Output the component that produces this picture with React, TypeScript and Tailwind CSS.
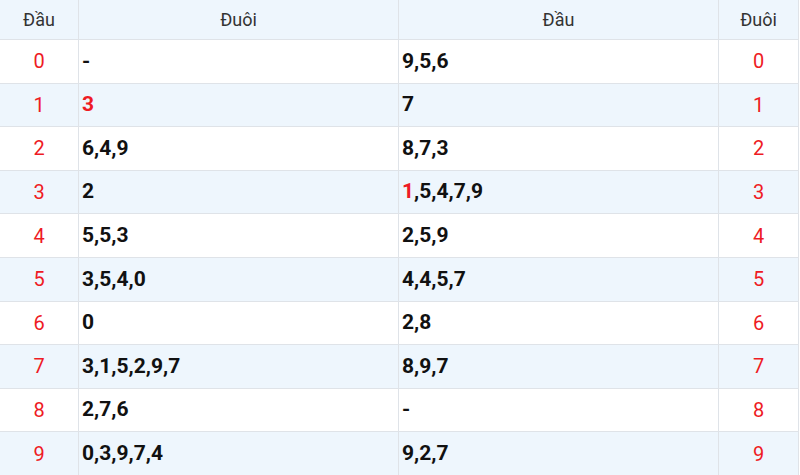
const rows: [string, string, string][] = [
  ["0", "-", "9,5,6"],
  ["1", "3", "7"],
  ["2", "6,4,9", "8,7,3"],
  ["3", "2", "1,5,4,7,9"],
  ["4", "5,5,3", "2,5,9"],
  ["5", "3,5,4,0", "4,4,5,7"],
  ["6", "0", "2,8"],
  ["7", "3,1,5,2,9,7", "8,9,7"],
  ["8", "2,7,6", "-"],
  ["9", "0,3,9,7,4", "9,2,7"],
];

// the 13 / 31 pair is marked in red
const hot: Record<string, number> = { "1-tail": 0, "3-head": 0 };

function Values({ text, mark }: { text: string; mark?: number }) {
  const parts = text.split(",");
  return (
    <>
      {parts.map((p, i) => (
        <span key={i}>
          <span className={i === mark ? "text-[#ee1b24]" : ""}>{p}</span>
          {i < parts.length - 1 ? "," : ""}
        </span>
      ))}
    </>
  );
}

export default function App() {
  const cell = "border-b border-r border-[#dfe3e8] flex items-center";
  const head = `${cell} h-[40px] justify-center bg-[#eef6fd] text-[18px] text-[#333]`;
  return (
    <div className="w-[800px] h-[475px] overflow-hidden bg-white font-['Roboto',sans-serif]">
      <div className="grid grid-cols-[79px_320px_320px_80px]">
        <div className={head}>Đầu</div>
        <div className={head}>Đuôi</div>
        <div className={head}>Đầu</div>
        <div className={head}>Đuôi</div>
        {rows.map(([n, tail, hd], i) => {
          const bg = i % 2 === 1 ? "bg-[#eef6fd]" : "bg-white";
          return (
            <div key={n} className="contents">
              <div className={`${cell} ${bg} h-[43.6px] justify-center text-[20px] text-[#ee1b24]`}>{n}</div>
              <div className={`${cell} ${bg} h-[43.6px] pl-[3px] text-[21px] font-bold text-[#111]`}>
                <Values text={tail} mark={hot[`${n}-tail`]} />
              </div>
              <div className={`${cell} ${bg} h-[43.6px] pl-[3px] text-[21px] font-bold text-[#111]`}>
                <Values text={hd} mark={hot[`${n}-head`]} />
              </div>
              <div className={`${cell} ${bg} h-[43.6px] justify-center text-[20px] text-[#ee1b24]`}>{n}</div>
            </div>
          );
        })}
      </div>
    </div>
  );
}
